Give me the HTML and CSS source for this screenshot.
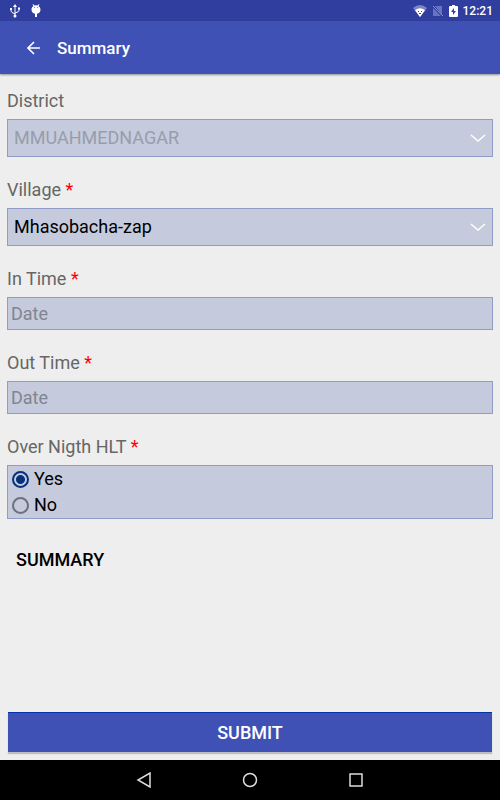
FILE: index.html
```html
<!DOCTYPE html>
<html lang="en">
<head>
    <meta charset="UTF-8">
    <meta name="viewport" content="width=device-width, initial-scale=1.0">
    <title>Summary</title>
    <link rel="stylesheet" href="styles.css">
</head>
<body>
    <div class="status-bar">
        <svg width="12" height="14" viewBox="0 0 12 14" fill="none" stroke="#fff" stroke-width="1">
            <path d="M6 2v10M2 5v2q0 1.500 4 3M10 5v1.500q0 1.500-4 2.500"/>
            <path d="M6 0l2 3H4zM1 4h2v2H1zM9 3.500h2v2H9z" fill="#fff" stroke="none"/>
            <circle cx="6" cy="12" r="1.500" fill="#fff" stroke="none"/>
        </svg>
        <svg width="10" height="14" viewBox="0 0 10 14">
            <path d="M2 0l1.500 1.500Q5 .8 6.500 1.500L8 0l.4.500-.8 1.700Q9.500 3 9.500 5.500C9.500 8 8 9.500 6 9.700V13H4V9.700C2 9.500.5 8 .5 5.500.5 3 2 2.500 2.400 2.200L1.600.5z" fill="#fff"/>
            <path d="M3 3h1v1H3zM6 3h1v1H6z" fill="#7f88c5"/>
        </svg>
        <div class="status-right">
            <svg width="14" height="12" viewBox="0 0 14 12">
                <path d="M7 12L0 3Q7-3 14 3z" fill="#7b85c4"/>
                <path d="M7 12L2 5.200Q7 1.500 12 5.200z" fill="#fff"/>
                <path d="M5 6.500h1M8 6.500h1M6 8.500h2" fill="none" stroke="#303f9f"/>
            </svg>
            <svg width="12" height="12" viewBox="0 0 12 12">
                <path d="M3 1h7v9zM1 3l8 8H1z" fill="#6974ba"/>
                <path d="M1 1l10 10" stroke="#8790c9"/>
            </svg>
            <svg width="9" height="12" viewBox="0 0 9 12">
                <path d="M3 0h3v1h2q1 0 1 1v9q0 1-1 1H1q-1 0-1-1V2q0-1 1-1h2z" fill="#fff"/>
                <path d="M5 3L2 7h2v3l3-4H5z" fill="#303f9f"/>
            </svg>
            <span>12:21</span>
        </div>
    </div>

    <header class="toolbar">
        <a href="#" class="back" aria-label="Back">
            <svg width="14" height="14" viewBox="0 0 14 14" fill="none" stroke="#fff" stroke-width="1.600">
                <path d="M13 7H2M7 1L1 7l6 6"/>
            </svg>
        </a>
        <h1>Summary</h1>
    </header>

    <form class="form">
        <div class="field">
            <label for="district">District</label>
            <div class="select-box">
                <select id="district" disabled>
                    <option>MMUAHMEDNAGAR</option>
                </select>
                <svg width="16" height="8" viewBox="0 0 16 8" fill="none" stroke="#fff" stroke-width="1.500">
                    <path d="M1 1l7 6 7-6"/>
                </svg>
            </div>
        </div>
        <div class="field">
            <label for="village">Village <span class="required">*</span></label>
            <div class="select-box">
                <select id="village">
                    <option>Mhasobacha-zap</option>
                </select>
                <svg width="16" height="8" viewBox="0 0 16 8" fill="none" stroke="#fff" stroke-width="1.500">
                    <path d="M1 1l7 6 7-6"/>
                </svg>
            </div>
        </div>
        <div class="field">
            <label for="in-time">In Time <span class="required">*</span></label>
            <input type="text" class="date" id="in-time" placeholder="Date">
        </div>
        <div class="field">
            <label for="out-time">Out Time <span class="required">*</span></label>
            <input type="text" class="date" id="out-time" placeholder="Date">
        </div>
        <fieldset class="field">
            <legend>Over Nigth HLT <span class="required">*</span></legend>
            <div class="radio-box">
                <label><input type="radio" name="halt" value="yes" checked>Yes</label>
                <label><input type="radio" name="halt" value="no">No</label>
            </div>
        </fieldset>
        <h2>SUMMARY</h2>
        <button type="submit" class="submit">SUBMIT</button>
    </form>

    <nav class="nav-bar">
        <button type="button" aria-label="Back">
            <svg width="16" height="16" viewBox="0 0 16 16" fill="none" stroke="#ddd" stroke-width="1.500">
                <path d="M14 1v14L2 8z"/>
            </svg>
        </button>
        <button type="button" aria-label="Home">
            <svg width="16" height="16" viewBox="0 0 16 16" fill="none" stroke="#ddd" stroke-width="1.500">
                <circle cx="8" cy="8" r="6.500"/>
            </svg>
        </button>
        <button type="button" aria-label="Recent apps">
            <svg width="16" height="16" viewBox="0 0 16 16" fill="none" stroke="#ddd" stroke-width="1.500">
                <path d="M2 2h12v12H2z"/>
            </svg>
        </button>
    </nav>
</body>
</html>
```
FILE: styles.css
```css
* {
    box-sizing: border-box;
}

body {
    font-family: Roboto, sans-serif;
    font-size: 18px;
    line-height: 24px;
    background-color: #eee;
    color: #000;
    margin: 0;
    min-height: 100vh;
    display: flex;
    flex-direction: column;
}

svg {
    display: block;
}

.status-bar {
    display: flex;
    align-items: center;
    gap: 10px;
    height: 21px;
    padding: 0 7px 0 9px;
    background-color: #303f9f;
    color: #fff;
    font-size: 12px;
    font-weight: 500;
}

.status-right {
    display: flex;
    align-items: center;
    gap: 5px;
    margin-left: auto;
}

.toolbar {
    display: flex;
    align-items: center;
    gap: 16px;
    height: 53px;
    padding: 0 27px;
    background-color: #3f51b5;
    color: #fff;
    box-shadow: 0 1px 2px rgba(0, 0, 0, 0.4);
}

.toolbar h1 {
    margin: 0;
    font-size: 17px;
    font-weight: 500;
}

.form {
    flex: 1;
    display: flex;
    flex-direction: column;
    padding: 15px 7px 8px;
}

.field {
    display: flex;
    flex-direction: column;
    gap: 6px;
    margin: 0 0 21px;
    padding: 0;
    border: 0;
    color: #666;
}

legend {
    padding: 0;
    margin-bottom: 6px;
}

.required {
    color: #f00;
}

select,
input,
button {
    font: inherit;
}

.select-box,
.date,
.radio-box {
    background-color: #c5cbdc;
    border: 1px solid #8f9dc6;
}

.select-box {
    display: grid;
    align-items: center;
    height: 38px;
}

.select-box select,
.select-box svg {
    grid-area: 1 / 1;
}

.select-box select {
    appearance: none;
    width: 100%;
    height: 36px;
    padding: 0 32px 0 6px;
    border: 0;
    background: none;
    color: #000;
}

.select-box select:disabled {
    color: #979dab;
    opacity: 1;
}

.select-box svg {
    justify-self: end;
    margin-right: 6px;
    pointer-events: none;
}

.date {
    width: 100%;
    height: 33px;
    padding: 0 3px;
    border-radius: 0;
    color: #000;
}

.date::placeholder {
    color: #808592;
}

.radio-box label {
    display: flex;
    align-items: center;
    gap: 5px;
    height: 26px;
    padding-left: 4px;
    color: #000;
}

.radio-box input {
    appearance: none;
    width: 17px;
    height: 17px;
    margin: 0;
    border: 2px solid #6c707a;
    border-radius: 50%;
}

.radio-box input:checked {
    border-color: #04307c;
    background: radial-gradient(#04307c 4px, transparent 5px);
}

.form h2 {
    margin: 8px 9px;
    font-size: 18px;
    font-weight: 500;
}

.submit {
    height: 40px;
    margin: auto 1px 0;
    border: 0;
    border-top: 1px solid #0033aa;
    background-color: #3f51b5;
    color: #fff;
    font-weight: 500;
    box-shadow: 0 2px 1px rgba(0, 0, 0, 0.2);
}

.nav-bar {
    display: flex;
    justify-content: center;
    align-items: center;
    gap: 90px;
    height: 40px;
    background-color: #000;
}

.nav-bar button {
    padding: 0;
    border: 0;
    background: none;
}
```
